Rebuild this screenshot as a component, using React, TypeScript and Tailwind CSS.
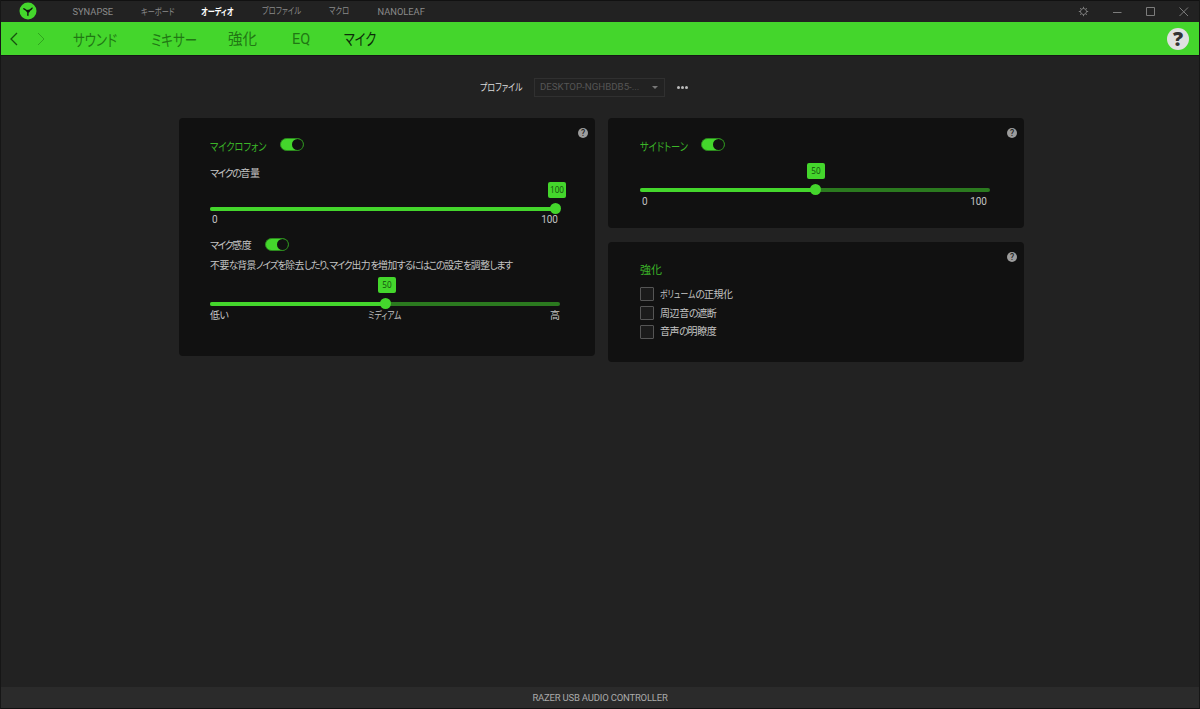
import React from 'react'
import clsx from 'clsx'

type TextProps = { children: React.ReactNode; className?: string }

// kana glyphs are set condensed, the outer width keeps the flow in step
const Kana = ({ children, className }: TextProps) => (
  <span className={clsx('block shrink-0 whitespace-nowrap', className)}>
    <span className="inline-block origin-left scale-x-[0.78]">{children}</span>
  </span>
)

const Mixed = ({ text }: { text: string }) => (
  <>
    {text.split(/([\u3040-\u30ff、]+)/).map((part, i) => (
      <span key={i} className={i % 2 ? 'tracking-[-1.250px]' : 'tracking-[-0.400px]'}>
        {part}
      </span>
    ))}
  </>
)

const Help = () => (
  <span className="absolute right-[7px] top-[10px] flex h-[10px] w-[10px] items-center justify-center rounded-full bg-[#9c9c9c] text-[8.500px] font-medium leading-none text-[#222]">
    ?
  </span>
)

const Toggle = () => (
  <span className="flex h-[13px] w-6 shrink-0 justify-end rounded-full border border-[#2c8a1e] bg-[#44d62c]">
    <span className="h-[11px] w-[11px] rounded-full bg-[#111]" />
  </span>
)

type SliderProps = { value: number; left: number; badge: string }

const Slider = ({ value, left, badge }: SliderProps) => (
  <div className="relative h-1 w-[350px] rounded-full bg-[#2b7a1f]">
    <div className="h-1 rounded-full bg-[#44d62c]" style={{ width: left }} />
    <span
      className="absolute -top-[4.5px] h-[11px] w-[11px] rounded-full bg-[#44d62c]"
      style={{ left: left - 5 }}
    />
    <span
      className={clsx(
        "absolute -top-[25px] flex h-4 w-[18px] items-center justify-center rounded-[2px] bg-[#44d62c] font-['Open_Sans'] text-[8.200px] text-[#14500c]",
        badge
      )}
    >
      {value}
    </span>
  </div>
)

const Panel = ({ children, className }: TextProps) => (
  <section className={clsx('relative w-[416px] rounded-[4px] bg-[#111]', className)}>
    <Help />
    {children}
  </section>
)

const TopBar = () => (
  <header className="flex h-[22px] items-center border-t border-[#111] bg-[#222] text-[9.300px] text-[#8a8a8a]">
    <svg viewBox="0 0 18 18" className="-mt-[2px] ml-[18px] h-[18px] w-[18px]">
      <circle cx="9" cy="9" r="8.5" fill="#44d62c" />
      <path
        d="M4.300 6.600c1.200 0 1.600 1.500 2.900 1.600M13.600 5.900c-1.200.3-1.500 1.900-2.800 2.100M8.600 13.700c.8-1 0-2.300.4-3.500M7 8.100l2 .5 2-.7-1.200 1.900H8.500z"
        fill="#111"
        stroke="#111"
        strokeWidth="1.400"
        strokeLinejoin="round"
      />
    </svg>
    <span className="ml-[35.500px] w-[68px]">SYNAPSE</span>
    <Kana className="w-[60.500px] text-[9.200px]">キーボード</Kana>
    <Kana className="w-[60.500px] text-[9.200px] font-bold text-white">オーディオ</Kana>
    <Kana className="w-[67.500px] text-[9.400px]">プロファイル</Kana>
    <Kana className="w-[48.500px] text-[9.400px]">マクロ</Kana>
    <span>NANOLEAF</span>
    <svg viewBox="0 0 120 20" className="-mt-[2px] ml-auto mr-[7px] h-5 w-[120px]" fill="none" stroke="#7c7c7c">
      <circle cx="11.500" cy="10.500" r="3" />
      <path d="M11.500 5.800v1.700M11.500 13.500v1.700M6.800 10.500h1.700M14.500 10.500h1.700M8.200 7.200l1.200 1.200M13.600 12.600l1.200 1.200M14.800 7.200l-1.200 1.200M9.400 12.600l-1.200 1.200" />
      <path d="M41 11.500h8.500M74.500 6.500h8v8h-8zM107.500 6.500l8.500 8.500M116 6.500l-8.500 8.500" />
    </svg>
  </header>
)

const NavBar = () => (
  <nav className="flex h-[33px] items-center bg-[#44d62c] text-[15px] text-[#217714]">
    <svg viewBox="0 0 46 14" className="ml-[3px] h-[14px] w-[46px]" fill="none">
      <path d="M13 1L7 7l6 6" stroke="#17520f" strokeWidth="1.300" />
      <path d="M34 1l6 6-6 6" stroke="#30a51e" />
    </svg>
    <div className="flex pl-[23px] pt-[5px]">
      <Kana className="w-[78px] text-[16px]">サウンド</Kana>
      <Kana className="w-[77px] text-[16px]">ミキサー</Kana>
      <span className="w-[64px] text-[14.500px]">強化</span>
      <span className="w-[52px] text-[14.500px]">EQ</span>
      <Kana className="w-10 text-[15.500px] text-[#0c2b08]">マイク</Kana>
    </div>
    <span className="ml-auto mr-[10px] flex h-[22px] w-[22px] items-center justify-center rounded-full bg-[#e0e0e0] font-['Open_Sans'] text-[20px] font-extrabold leading-none text-[#333]">
      ?
    </span>
  </nav>
)

const ProfileRow = () => (
  <div className="flex h-[18px] items-center pl-[479px]">
    <Kana className="w-[54px] pt-[2px] text-[10.200px] text-[#ddd]">プロファイル</Kana>
    <div className="flex h-[19px] w-[131px] items-center justify-between border border-[#303030] pl-[5px] pr-1.5 pt-px text-[9.700px] text-[#555]">
      DESKTOP-NGHBDB5-...
      <span className="border-x-[3px] border-t-[3px] border-x-transparent border-t-[#777]" />
    </div>
    <div className="ml-3 flex gap-[1px]">
      {[0, 1, 2].map((i) => (
        <span key={i} className="h-[3px] w-[3px] rounded-full bg-[#bbb]" />
      ))}
    </div>
  </div>
)

const MicPanel = () => (
  <Panel className="h-[238px] pl-[31px] pt-5">
    <div className="flex h-[15px] items-start text-[11.800px] leading-[18px] text-[#3bb528]">
      <Kana className="w-[70px]">マイクロフォン</Kana>
      <Toggle />
    </div>
    <p className="mt-[13px] h-4 text-[10px] leading-4 tracking-[-0.300px]">
      <span className="tracking-[-1.500px]">マイクの</span>音量
    </p>
    <div className="mt-[25px]">
      <Slider value={100} left={345} badge="left-[338px]" />
    </div>
    <div className="mt-[2px] flex h-[14px] w-[348px] justify-between pl-[2px] text-[10px] leading-[14px]">
      <span>0</span>
      <span>100</span>
    </div>
    <div className="mt-[11px] flex h-4 items-start text-[10px] leading-[15px]">
      <span className="w-[55px] tracking-[-0.300px]">
        <span className="tracking-[-1.500px]">マイク</span>感度
      </span>
      <Toggle />
    </div>
    <p className="mt-[4px] h-4 whitespace-nowrap text-[9.800px] leading-4">
      <Mixed text="不要な背景ノイズを除去したり、マイク出力を増加するにはこの設定を調整します" />
    </p>
    <div className="mt-[28px]">
      <Slider value={50} left={175} badge="left-[168px]" />
    </div>
    <div className="mt-[2px] flex h-4 w-[350px] justify-between text-[10px] leading-4">
      <span className="w-[158px] tracking-[-0.500px]">低い</span>
      <Kana className="w-10">ミディアム</Kana>
      <span className="ml-auto">高</span>
    </div>
  </Panel>
)

const SidetonePanel = () => (
  <Panel className="h-[110px] pl-8 pt-5">
    <div className="flex h-[15px] items-start text-[11.800px] leading-[18px] text-[#3bb528]">
      <Kana className="w-[61px]">サイドトーン</Kana>
      <Toggle />
    </div>
    <div className="mt-[35px]">
      <Slider value={50} left={174.5} badge="left-[167px]" />
    </div>
    <div className="mt-[3px] flex h-[14px] w-[347px] justify-between pl-[2px] text-[10px] leading-[14px]">
      <span>0</span>
      <span>100</span>
    </div>
  </Panel>
)

const EnhancePanel = () => (
  <Panel className="h-[120px] pl-8 pt-5">
    <h2 className="h-[18px] text-[11px] leading-[18px] text-[#3bb528]">強化</h2>
    <div className="mt-[5px]">
      {options.map(({ kana, label }) => (
        <label key={label} className="flex h-[18.800px] items-center text-[10px]">
          <span className="mr-1.5 h-[14px] w-[14px] rounded-[1px] border border-[#555] bg-[#1b1b1b]" />
          {kana && <Kana className="w-[35.500px]">{kana}</Kana>}
          <span>
            <Mixed text={label} />
          </span>
        </label>
      ))}
    </div>
  </Panel>
)

export default function App() {
  return (
    <div className="flex h-[709px] w-[1200px] flex-col overflow-hidden border-x border-[#161616] bg-[#222] font-['Roboto','Noto_Sans_CJK_JP',sans-serif] text-[#c4c4c4] [font-feature-settings:'palt']">
      <TopBar />
      <NavBar />
      <main className="flex-1 border-t border-[#171717] pt-[22px]">
        <ProfileRow />
        <div className="mt-[22px] flex items-start gap-[13px] pl-[178px]">
          <MicPanel />
          <div className="flex flex-col gap-[14px]">
            <SidetonePanel />
            <EnhancePanel />
          </div>
        </div>
      </main>
      <footer className="flex h-[22px] items-center justify-center border-b border-[#111] bg-[#2b2b2b] pt-[2px] text-[9.500px] tracking-[-0.200px] text-[#aaa]">
        RAZER USB AUDIO CONTROLLER
      </footer>
    </div>
  )
}

const options = [
  { kana: 'ボリューム', label: 'の正規化' },
  { kana: '', label: '周辺音の遮断' },
  { kana: '', label: '音声の明瞭度' },
]
